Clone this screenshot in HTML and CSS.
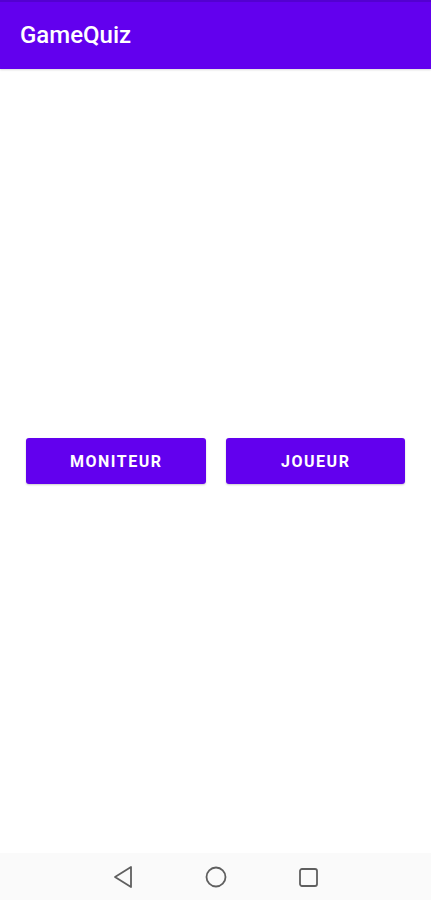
FILE: index.html
```html
<!DOCTYPE html>
<html>
<head>
<meta charset="utf-8">
<link rel="stylesheet" href="styles.css">
</head>
<body>
<div class="screen">
  <header class="appbar"><span class="title">GameQuiz</span></header>
  <main class="content">
    <div class="buttons">
      <button class="btn">MONITEUR</button>
      <button class="btn">JOUEUR</button>
    </div>
  </main>
  <nav class="navbar">
    <svg class="nav-icon" width="22" height="24" viewBox="0 0 22 24"><polygon points="3,12 19,2 19,22" fill="none" stroke="#5f5f5f" stroke-width="1.8" stroke-linejoin="round"/></svg>
    <svg class="nav-icon" width="24" height="24" viewBox="0 0 24 24"><circle cx="12" cy="12" r="9.5" fill="none" stroke="#5f5f5f" stroke-width="1.8"/></svg>
    <svg class="nav-icon" width="22" height="22" viewBox="0 0 22 22"><rect x="2" y="2" width="17" height="17" rx="2" fill="none" stroke="#5f5f5f" stroke-width="1.8"/></svg>
  </nav>
</div>
</body>
</html>
```
FILE: styles.css
```css
html, body {
  margin: 0;
  padding: 0;
  background: #ffffff;
}
.screen {
  width: 431px;
  height: 900px;
  display: flex;
  flex-direction: column;
  font-family: Roboto, "Noto Sans", sans-serif;
}
.appbar {
  height: 69px;
  background: #6200ee;
  border-top: 2px solid #5300d0;
  box-sizing: border-box;
  display: flex;
  align-items: center;
  padding-left: 20px;
  box-shadow: 0 1px 2px rgba(0,0,0,0.15);
}
.title {
  color: #ffffff;
  font-size: 24px;
  font-weight: 500;
  margin-top: -2px;
}
.content {
  flex: 1;
  display: flex;
  flex-direction: column;
  padding-top: 369px;
}
.buttons {
  display: flex;
  gap: 20px;
  padding: 0 26px;
}
.btn {
  width: 180px;
  height: 46px;
  background: #6200ee;
  color: #ffffff;
  border: none;
  border-radius: 3px;
  font-family: Roboto, sans-serif;
  font-weight: 700;
  font-size: 16px;
  letter-spacing: 1.5px;
  padding: 0 0 0 1px;
  box-shadow: 0 1px 2px rgba(0,0,0,0.2);
}
.navbar {
  height: 47px;
  background: #fafafa;
  display: flex;
  align-items: center;
  justify-content: center;
}
.nav-icon:nth-child(1) { margin-right: 70px; margin-top: 1px; }
.nav-icon:nth-child(2) { margin-right: 70px; margin-top: 1px; }
.nav-icon:nth-child(3) { margin-top: 2px; }
```
